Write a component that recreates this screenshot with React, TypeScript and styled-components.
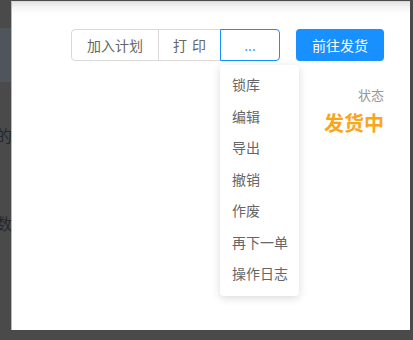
import styled, { createGlobalStyle } from "styled-components";

const GlobalStyle = createGlobalStyle`
  html, body {
    margin: 0;
    padding: 0;
    background: #4a4a4a;
    font-family: "Noto Sans CJK SC", "Noto Sans", sans-serif;
  }
`;

const menuItems = ["锁库", "编辑", "导出", "撤销", "作废", "再下一单", "操作日志"];

const App = () => {
  return (
    <>
      <GlobalStyle />
      <Screen>
        <BehindStrip>
          <BehindBand />
          <BehindChar top={44}>的</BehindChar>
          <BehindChar top={70}>数</BehindChar>
        </BehindStrip>
        <Panel>
          <Toolbar>
            <ButtonGroup>
              <GroupButton width={88}>加入计划</GroupButton>
              <GroupButton width={63} spaced>
                打 印
              </GroupButton>
              <MoreWrap>
                <GroupButton width={60} active>
                  ...
                </GroupButton>
                <Menu>
                  {menuItems.map((item) => (
                    <MenuItem key={item}>{item}</MenuItem>
                  ))}
                </Menu>
              </MoreWrap>
            </ButtonGroup>
            <PrimaryButton>前往发货</PrimaryButton>
          </Toolbar>
          <StatusBlock>
            <StatusLabel>状态</StatusLabel>
            <StatusValue>发货中</StatusValue>
          </StatusBlock>
        </Panel>
      </Screen>
    </>
  );
};

export default App;

const Screen = styled.div`
  display: flex;
  width: 413px;
  height: 340px;
  overflow: hidden;
  background: #4a4a4a;
`;

const BehindStrip = styled.div`
  display: flex;
  flex-direction: column;
  width: 11px;
  flex-shrink: 0;
  padding-top: 28px;
  overflow: hidden;
`;

const BehindBand = styled.div`
  height: 54px;
  background: #4f555a;
`;

const BehindChar = styled.div<{ top: number }>`
  margin-top: ${(p) => p.top}px;
  margin-left: -4px;
  font-family: "Noto Sans CJK SC", serif;
  font-size: 16px;
  line-height: 18px;
  color: #23282f;
  white-space: nowrap;
`;

const Panel = styled.div`
  display: flex;
  flex-direction: column;
  width: 398px;
  height: 328px;
  margin-top: 1px;
  border-left: 1px solid #b8b8b8;
  border-top: 1px solid #d8d8d8;
  background: linear-gradient(#e4e4e4 0px, #f6f6f6 6px, #ffffff 12px);
`;

const Toolbar = styled.div`
  display: flex;
  justify-content: flex-end;
  align-items: center;
  gap: 16px;
  padding: 27px 26px 0 0;
`;

const ButtonGroup = styled.div`
  display: flex;
`;

const MoreWrap = styled.div`
  position: relative;
  display: flex;
  margin-left: -1px;
`;

const GroupButton = styled.button<{ width: number; active?: boolean; spaced?: boolean }>`
  width: ${(p) => p.width}px;
  height: 32px;
  padding: 0 0 0 ${(p) => (p.spaced ? "1px" : "0")};
  border: 1px solid ${(p) => (p.active ? "#1890ff" : "#d9d9d9")};
  margin-left: -1px;
  background: #fff;
  color: ${(p) => (p.active ? "#4aa6ff" : "#666")};
  font-family: "Noto Sans CJK SC", sans-serif;
  font-size: 14px;
  line-height: 30px;
  letter-spacing: ${(p) => (p.spaced ? "1px" : "0")};
  cursor: pointer;
  position: relative;
  z-index: ${(p) => (p.active ? 1 : 0)};

  &:first-child {
    border-radius: 4px 0 0 4px;
    margin-left: 0;
  }

  ${MoreWrap} & {
    border-radius: 0 4px 4px 0;
  }
`;

const PrimaryButton = styled.button`
  width: 88px;
  height: 32px;
  border: none;
  border-radius: 4px;
  background: #1890ff;
  color: #fff;
  font-family: "Noto Sans CJK SC", sans-serif;
  font-size: 14px;
  cursor: pointer;
`;

const Menu = styled.div`
  position: absolute;
  top: 36px;
  left: 0;
  width: 79px;
  display: flex;
  flex-direction: column;
  padding: 4px 0 6px;
  background: #fff;
  border-radius: 4px;
  box-shadow: 0 2px 8px rgba(0, 0, 0, 0.15);
  z-index: 2;
`;

const MenuItem = styled.div`
  height: 31.5px;
  line-height: 31.5px;
  padding-left: 12px;
  font-size: 14px;
  color: #666;
  white-space: nowrap;
`;

const StatusBlock = styled.div`
  display: flex;
  flex-direction: column;
  align-items: flex-end;
  padding: 25px 26px 0 0;
`;

const StatusLabel = styled.div`
  font-size: 13px;
  line-height: 18px;
  color: #999;
`;

const StatusValue = styled.div`
  margin-top: 6px;
  font-size: 20px;
  line-height: 26px;
  font-weight: 700;
  color: #faa61a;
`;
